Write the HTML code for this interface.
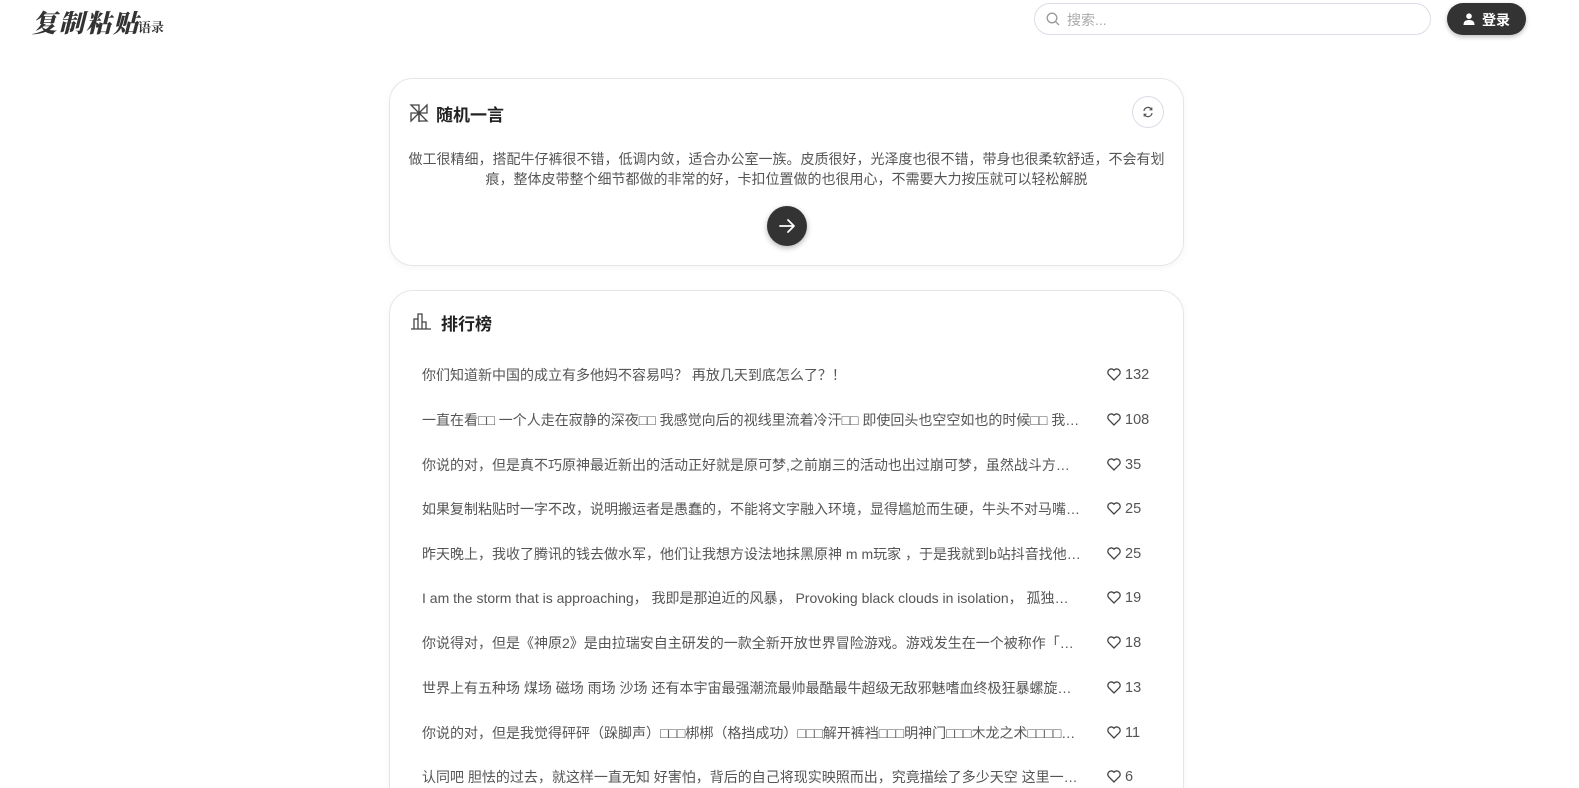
<!DOCTYPE html>
<html><head><meta charset="utf-8"><style>
*{margin:0;padding:0;box-sizing:border-box}
html{width:1579px;height:788px;overflow:hidden}
body{width:1579px;height:788px;overflow:hidden;background:#fff;font-family:"Liberation Sans","Noto Sans CJK SC",sans-serif;color:#333;position:relative}
.logo{position:absolute;left:32px;top:4px;font-family:"Noto Serif CJK SC",serif;font-weight:900;font-size:25px;color:#333;letter-spacing:2px;font-style:italic}
.logo small{font-size:13px;font-style:normal;font-weight:700;letter-spacing:0;margin-left:-2px}
.search{position:absolute;left:1034px;top:3px;width:397px;height:32px;border:1px solid #dcdce6;border-radius:16px}
.search span{position:absolute;left:32px;top:6px;font-size:14px;color:#aaa}
.search svg{position:absolute;left:11px;top:8px}
.login{position:absolute;left:1447px;top:3px;width:79px;height:32px;border-radius:16px;background:#333;color:#fff;font-size:14px;font-weight:bold;box-shadow:0 2px 5px rgba(0,0,0,.25)}
.login svg{position:absolute;left:16px;top:10px}
.login span{position:absolute;left:35px;top:7px}
.card{position:absolute;left:389px;width:795px;border:1px solid #e6e6ea;border-radius:24px;box-shadow:0 2px 8px rgba(0,0,0,.04);background:#fff}
.title{position:absolute;font-size:17px;font-weight:bold;color:#222}
.quote{position:absolute;left:14px;right:14px;top:70px;text-align:center;font-size:14px;line-height:20px;color:#555}
.go{position:absolute;left:377px;top:127px;width:40px;height:40px;border-radius:50%;background:#333;box-shadow:0 2px 6px rgba(0,0,0,.3)}
.ref{position:absolute;left:742px;top:17px;width:32px;height:32px;border-radius:50%;border:1px solid #dcdce6}
.row{position:absolute;left:32px;width:740px;height:20px;font-size:14px;color:#555}
.row .t{position:absolute;left:0;top:2px;width:660px;white-space:nowrap;overflow:hidden;text-overflow:ellipsis}
.row .l{position:absolute;left:685px;top:4px;color:#555;font-size:14.5px}
.row .l svg{vertical-align:-2px;margin-right:4px}
</style></head><body>
<div class="logo">复制粘贴<small>语录</small></div>
<div class="search"><svg width="14" height="14" viewBox="0 0 14 14"><circle cx="6" cy="6" r="4.8" fill="none" stroke="#999" stroke-width="1.3"/><path d="M9.6 9.6L13 13" stroke="#999" stroke-width="1.3"/></svg><span>搜索...</span></div>
<div class="login"><svg width="12" height="12" viewBox="0 0 12 12"><circle cx="6" cy="3.2" r="2.8" fill="#fff"/><path d="M0.5 12C0.5 8 3 7 6 7S11.5 8 11.5 12Z" fill="#fff"/></svg><span>登录</span></div>

<div class="card" style="top:78px;height:188px">
 <svg style="position:absolute;left:19px;top:24px" width="20" height="20" viewBox="0 0 20 20" fill="none" stroke="#444" stroke-width="1.3"><path d="M10 10L2 2H10Z M10 10L18 2V10Z M10 10L18 18H10Z M10 10L2 18V10Z"/><path d="M10 10L10 19"/></svg>
 <div class="title" style="left:46px;top:22px">随机一言</div>
 <div class="ref"><svg style="position:absolute;left:9px;top:9px" width="12" height="12" viewBox="0 0 12 12" fill="none" stroke="#555" stroke-width="1.2"><path d="M2 5A4 4 0 0 1 9.5 3.5M10 7A4 4 0 0 1 2.5 8.5"/><path d="M9.8 1.5V3.8H7.5M2.2 10.5V8.2H4.5"/></svg></div>
 <div class="quote">做工很精细，搭配牛仔裤很不错，低调内敛，适合办公室一族。皮质很好，光泽度也很不错，带身也很柔软舒适，不会有划<br>痕，整体皮带整个细节都做的非常的好，卡扣位置做的也很用心，不需要大力按压就可以轻松解脱</div>
 <div class="go"><svg style="position:absolute;left:11px;top:11px" width="18" height="18" viewBox="0 0 18 18" fill="none" stroke="#fff" stroke-width="1.8" stroke-linecap="round" stroke-linejoin="round"><path d="M2 9H16M10 3L16 9L10 15"/></svg></div>
</div>

<div class="card" style="top:290px;height:520px">
 <svg style="position:absolute;left:20px;top:21px" width="22" height="18" viewBox="0 0 22 18" fill="none" stroke="#444" stroke-width="1.3"><path d="M1 17H21M4 17V7H8V17M8 17V2H12V17M12 17V10H16V17"/></svg>
 <div class="title" style="left:51px;top:19px">排行榜</div>
 <div class="row" style="top:72px"><div class="t">你们知道新中国的成立有多他妈不容易吗？ 再放几天到底怎么了？！</div><div class="l"><svg width="14" height="13" viewBox="0 0 14 13"><path d="M7 12L1.6 6.6A3.2 3.2 0 0 1 7 2.2A3.2 3.2 0 0 1 12.4 6.6Z" fill="none" stroke="#444" stroke-width="1.3"/></svg>132</div></div>
 <div class="row" style="top:117px"><div class="t">一直在看□□ 一个人走在寂静的深夜□□ 我感觉向后的视线里流着冷汗□□ 即使回头也空空如也的时候□□ 我感觉向后的视线里流着冷汗</div><div class="l"><svg width="14" height="13" viewBox="0 0 14 13"><path d="M7 12L1.6 6.6A3.2 3.2 0 0 1 7 2.2A3.2 3.2 0 0 1 12.4 6.6Z" fill="none" stroke="#444" stroke-width="1.3"/></svg>108</div></div>
 <div class="row" style="top:162px"><div class="t">你说的对，但是真不巧原神最近新出的活动正好就是原可梦,之前崩三的活动也出过崩可梦，虽然战斗方式不同</div><div class="l"><svg width="14" height="13" viewBox="0 0 14 13"><path d="M7 12L1.6 6.6A3.2 3.2 0 0 1 7 2.2A3.2 3.2 0 0 1 12.4 6.6Z" fill="none" stroke="#444" stroke-width="1.3"/></svg>35</div></div>
 <div class="row" style="top:206px"><div class="t">如果复制粘贴时一字不改，说明搬运者是愚蠢的，不能将文字融入环境，显得尴尬而生硬，牛头不对马嘴的回复</div><div class="l"><svg width="14" height="13" viewBox="0 0 14 13"><path d="M7 12L1.6 6.6A3.2 3.2 0 0 1 7 2.2A3.2 3.2 0 0 1 12.4 6.6Z" fill="none" stroke="#444" stroke-width="1.3"/></svg>25</div></div>
 <div class="row" style="top:251px"><div class="t">昨天晚上，我收了腾讯的钱去做水军，他们让我想方设法地抹黑原神 m m玩家 ，于是我就到b站抖音找他们的视频</div><div class="l"><svg width="14" height="13" viewBox="0 0 14 13"><path d="M7 12L1.6 6.6A3.2 3.2 0 0 1 7 2.2A3.2 3.2 0 0 1 12.4 6.6Z" fill="none" stroke="#444" stroke-width="1.3"/></svg>25</div></div>
 <div class="row" style="top:295px"><div class="t">I am the storm that is approaching， 我即是那迫近的风暴， Provoking black clouds in isolation， 孤独中激起乌云</div><div class="l"><svg width="14" height="13" viewBox="0 0 14 13"><path d="M7 12L1.6 6.6A3.2 3.2 0 0 1 7 2.2A3.2 3.2 0 0 1 12.4 6.6Z" fill="none" stroke="#444" stroke-width="1.3"/></svg>19</div></div>
 <div class="row" style="top:340px"><div class="t">你说得对，但是《神原2》是由拉瑞安自主研发的一款全新开放世界冒险游戏。游戏发生在一个被称作「绿色」的幻想世界</div><div class="l"><svg width="14" height="13" viewBox="0 0 14 13"><path d="M7 12L1.6 6.6A3.2 3.2 0 0 1 7 2.2A3.2 3.2 0 0 1 12.4 6.6Z" fill="none" stroke="#444" stroke-width="1.3"/></svg>18</div></div>
 <div class="row" style="top:385px"><div class="t">世界上有五种场 煤场 磁场 雨场 沙场 还有本宇宙最强潮流最帅最酷最牛超级无敌邪魅嗜血终极狂暴螺旋升天霸气</div><div class="l"><svg width="14" height="13" viewBox="0 0 14 13"><path d="M7 12L1.6 6.6A3.2 3.2 0 0 1 7 2.2A3.2 3.2 0 0 1 12.4 6.6Z" fill="none" stroke="#444" stroke-width="1.3"/></svg>13</div></div>
 <div class="row" style="top:430px"><div class="t">你说的对，但是我觉得砰砰（跺脚声）□□□梆梆（格挡成功）□□□解开裤裆□□□明神门□□□木龙之术□□□□□□□</div><div class="l"><svg width="14" height="13" viewBox="0 0 14 13"><path d="M7 12L1.6 6.6A3.2 3.2 0 0 1 7 2.2A3.2 3.2 0 0 1 12.4 6.6Z" fill="none" stroke="#444" stroke-width="1.3"/></svg>11</div></div>
 <div class="row" style="top:474px"><div class="t">认同吧 胆怯的过去，就这样一直无知 好害怕，背后的自己将现实映照而出，究竟描绘了多少天空 这里一直都是</div><div class="l"><svg width="14" height="13" viewBox="0 0 14 13"><path d="M7 12L1.6 6.6A3.2 3.2 0 0 1 7 2.2A3.2 3.2 0 0 1 12.4 6.6Z" fill="none" stroke="#444" stroke-width="1.3"/></svg>6</div></div>
</div>
</body></html>
